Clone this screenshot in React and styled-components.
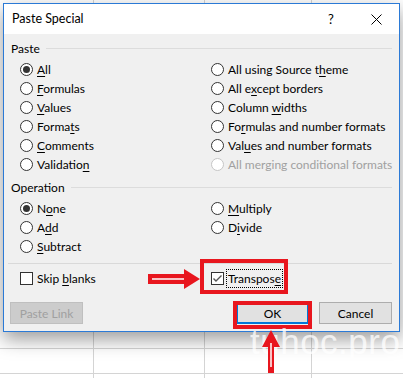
import React from 'react';
import styled, { createGlobalStyle } from 'styled-components';

const GlobalStyle = createGlobalStyle`
  html, body {
    margin: 0;
    padding: 0;
    background: #fff;
  }
  body {
    font-family: Lato, "Noto Sans", sans-serif;
    font-size: 12px;
    color: #000;
  }
`;

const Sheet = styled.div`
  position: relative;
  width: 403px;
  height: 378px;
  overflow: hidden;
  box-sizing: border-box;
  padding: 3px 3px 0 3px;
  background-color: #fff;
  background-image:
    linear-gradient(#d4d4d4, #d4d4d4),
    linear-gradient(#d4d4d4, #d4d4d4),
    linear-gradient(#d4d4d4, #d4d4d4),
    linear-gradient(#d4d4d4, #d4d4d4),
    linear-gradient(#d4d4d4, #d4d4d4);
  background-size: 1px 100%, 1px 100%, 1px 100%, 100% 1px, 100% 1px;
  background-position: 93px 0, 204px 0, 311px 0, 0 348px, 0 373px;
  background-repeat: no-repeat;
`;

const Dialog = styled.div`
  width: 397px;
  box-sizing: border-box;
  border: 1px solid #2b7ad6;
  background: #f0f0f0;
  box-shadow: 0 7px 18px rgba(0, 0, 0, 0.4);
`;

const TitleBar = styled.div`
  height: 30px;
  display: flex;
  align-items: center;
  background: #fff;
  padding: 0 0 0 8px;
`;

const Title = styled.div`
  flex: 1;
  font-size: 12.5px;
  padding-bottom: 1px;
`;

const TitleButton = styled.div`
  width: ${p => p.w}px;
  height: 30px;
  display: flex;
  align-items: center;
  justify-content: center;
  font-size: 13px;
`;

const Body = styled.div`
  padding: 7px 7px 7px 7px;
`;

const GroupHeader = styled.div`
  height: 14px;
  display: flex;
  align-items: center;
  gap: 6px;
  margin-top: ${p => p.top || 0}px;
  margin-bottom: 5px;

  &::after {
    content: '';
    flex: 1;
    height: 1px;
    background: #dcdcdc;
  }
`;

const OptionGrid = styled.div`
  display: grid;
  grid-template-columns: 191px 1fr;
  grid-auto-flow: column;
  grid-template-rows: repeat(${p => p.rows}, 19px);
  padding-left: 9px;
`;

const Option = styled.label`
  display: flex;
  align-items: center;
  gap: 4px;
  white-space: nowrap;
  color: ${p => (p.disabled ? '#a0a0a0' : '#000')};
`;

const RadioCircle = styled.span`
  width: 13px;
  height: 13px;
  box-sizing: border-box;
  border-radius: 50%;
  border: 1px solid ${p => (p.disabled ? '#c6c6c6' : '#333')};
  background: #fff;
  display: flex;
  align-items: center;
  justify-content: center;
  flex-shrink: 0;

  &::after {
    content: '';
    width: 7px;
    height: 7px;
    border-radius: 50%;
    background: ${p => (p.checked ? '#333' : 'transparent')};
  }
`;

const Box = styled.span`
  width: 13px;
  height: 13px;
  box-sizing: border-box;
  border: 1px solid #333;
  background: #fff;
  display: flex;
  align-items: center;
  justify-content: center;
  flex-shrink: 0;
`;

const Key = styled.span`
  text-decoration: underline;
  text-underline-offset: 2px;
`;

const Focus = styled.span`
  outline: 1px dotted #000;
  outline-offset: 1px;
`;

const Separator = styled.div`
  height: 1px;
  background: #d9d9d9;
  margin: 7px 0 5px -3px;
`;

const CheckRow = styled.div`
  display: grid;
  grid-template-columns: 191px 1fr;
  height: 19px;
  padding-left: 9px;
`;

const Buttons = styled.div`
  display: flex;
  align-items: center;
  margin-top: 14px;
  gap: 10px;
`;

const Button = styled.div`
  width: 73px;
  height: 22px;
  box-sizing: border-box;
  display: flex;
  align-items: center;
  justify-content: center;
  background: ${p => (p.disabled ? '#cccccc' : '#e1e1e1')};
  border: ${p => (p.primary ? '2px solid #0078d7' : `1px solid ${p.disabled ? '#bfbfbf' : '#adadad'}`)};
  color: ${p => (p.disabled ? '#a0a0a0' : '#000')};
  margin-left: ${p => p.left || 0}px;
`;

const Spacer = styled.div`
  flex: 1;
`;

const RedBox = styled.div`
  position: absolute;
  left: ${p => p.x}px;
  top: ${p => p.y}px;
  width: ${p => p.w}px;
  height: ${p => p.h}px;
  box-sizing: border-box;
  border: 4px solid #e8161e;
  pointer-events: none;
`;

const Overlay = styled.svg`
  position: absolute;
  left: ${p => p.x}px;
  top: ${p => p.y}px;
  pointer-events: none;
`;

const Watermark = styled.div`
  position: absolute;
  left: 250px;
  top: 322px;
  font-family: "Liberation Sans", Arial, sans-serif;
  font-size: 35px;
  color: rgba(255, 255, 255, 0.75);
  letter-spacing: 0.5px;
`;

function Radio({ checked, disabled, children }) {
  return (
    <Option disabled={disabled}>
      <RadioCircle checked={checked} disabled={disabled} />
      <span>{children}</span>
    </Option>
  );
}

function Check({ checked, children }) {
  return (
    <Option>
      <Box>
        {checked && (
          <svg width="11" height="11" viewBox="0 0 11 11">
            <polyline points="1.5,5.5 4,8 9.5,2.5" fill="none" stroke="#555" strokeWidth="1.4" />
          </svg>
        )}
      </Box>
      <span>{children}</span>
    </Option>
  );
}

export default function App() {
  return (
    <>
      <GlobalStyle />
      <Sheet>
        <Dialog>
          <TitleBar>
            <Title>Paste Special</Title>
            <TitleButton w={44}>?</TitleButton>
            <TitleButton w={46}>
              <svg width="11" height="11" viewBox="0 0 11 11">
                <path d="M0.5 0.5 L10.5 10.5 M10.5 0.5 L0.5 10.5" stroke="#000" strokeWidth="1" />
              </svg>
            </TitleButton>
          </TitleBar>
          <Body>
            <GroupHeader>Paste</GroupHeader>
            <OptionGrid rows={6}>
              <Radio checked><Key>A</Key>ll</Radio>
              <Radio><Key>F</Key>ormulas</Radio>
              <Radio><Key>V</Key>alues</Radio>
              <Radio>Forma<Key>t</Key>s</Radio>
              <Radio><Key>C</Key>omments</Radio>
              <Radio>Validatio<Key>n</Key></Radio>
              <Radio>All using Source t<Key>h</Key>eme</Radio>
              <Radio>All e<Key>x</Key>cept borders</Radio>
              <Radio>Column <Key>w</Key>idths</Radio>
              <Radio>Fo<Key>r</Key>mulas and number formats</Radio>
              <Radio>Val<Key>u</Key>es and number formats</Radio>
              <Radio disabled>All merging conditional formats</Radio>
            </OptionGrid>
            <GroupHeader top={6}>Operation</GroupHeader>
            <OptionGrid rows={3}>
              <Radio checked>N<Key>o</Key>ne</Radio>
              <Radio>A<Key>d</Key>d</Radio>
              <Radio><Key>S</Key>ubtract</Radio>
              <Radio><Key>M</Key>ultiply</Radio>
              <Radio>D<Key>i</Key>vide</Radio>
            </OptionGrid>
            <Separator />
            <CheckRow>
              <Check>Skip <Key>b</Key>lanks</Check>
              <Check checked><Focus>Transpos<Key>e</Key></Focus></Check>
            </CheckRow>
            <Buttons>
              <Button disabled left={-1}>Paste Link</Button>
              <Spacer />
              <Button primary>OK</Button>
              <Button>Cancel</Button>
            </Buttons>
          </Body>
        </Dialog>

        <RedBox x={200} y={259} w={88} h={35} />
        <RedBox x={233} y={301} w={79} h={28} />

        <Overlay x={146} y={268} width="56" height="22" viewBox="0 0 56 22">
          <path d="M2 6 L38 6 L38 1 L54 11 L38 21 L38 16 L2 16 Z" fill="#e8161e" />
          <path d="M6 11 L38 11" stroke="#fff" strokeWidth="1.5" />
        </Overlay>

        <Watermark>tuhoc.pro</Watermark>

        <Overlay x={261} y={329} width="20" height="45" viewBox="0 0 20 45">
          <path d="M10 1 L19 18 L13 18 L13 44 L7 44 L7 18 L1 18 Z" fill="#e8161e" />
          <path d="M10 14 L10 38" stroke="#fff" strokeWidth="1.5" />
        </Overlay>
      </Sheet>
    </>
  );
}
